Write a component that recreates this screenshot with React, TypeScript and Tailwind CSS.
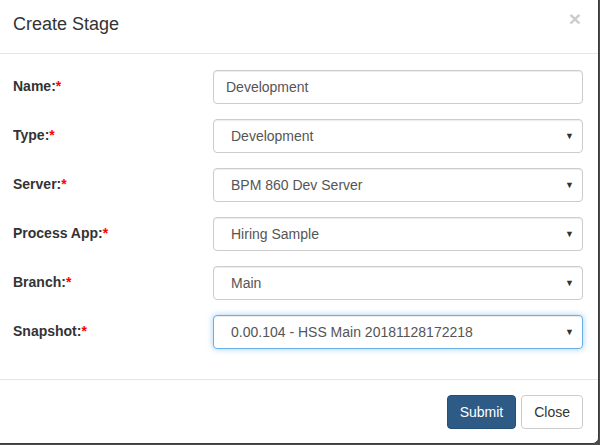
import { useState } from 'react'

const rows = [
  { label: 'Name:', value: 'Development', kind: 'input' },
  { label: 'Type:', value: 'Development', kind: 'select' },
  { label: 'Server:', value: 'BPM 860 Dev Server', kind: 'select' },
  { label: 'Process App:', value: 'Hiring Sample', kind: 'select' },
  { label: 'Branch:', value: 'Main', kind: 'select' },
  { label: 'Snapshot:', value: '0.00.104 - HSS Main 20181128172218', kind: 'select', focus: true },
]

function Field({ value, kind, focus }: { value: string; kind: string; focus?: boolean }) {
  const [val, setVal] = useState(value)
  const base =
    'w-[370px] h-[34px] rounded-[4px] border bg-white text-[14px] text-[#555] flex items-center'
  const border = focus
    ? 'border-[#66afe9] shadow-[inset_0_1px_1px_rgba(0,0,0,0.075),0_0_6px_rgba(102,175,233,0.6)]'
    : 'border-[#ccc] shadow-[inset_0_1px_1px_rgba(0,0,0,0.075)]'

  if (kind === 'input') {
    return (
      <input
        value={val}
        onChange={(e) => setVal(e.target.value)}
        className={`${base} ${border} px-[12px] outline-none`}
      />
    )
  }
  return (
    <div className={`${base} ${border} pl-[17px] pr-[8px] justify-between`}>
      <span>{val}</span>
      <span className="text-[9px] text-[#333] leading-none">▼</span>
    </div>
  )
}

export default function App() {
  return (
    <div
      className="w-[600px] h-[445px] bg-[#4d4d4d] overflow-hidden"
      style={{ fontFamily: '"Liberation Sans", Arial, sans-serif' }}
    >
      <div className="w-[599px] h-[444px] bg-white rounded-br-[6px] border-r border-b border-[#3a3a3a] flex flex-col">
        <div className="h-[54px] shrink-0 border-b border-[#e5e5e5] flex items-start justify-between pl-[13px] pr-[17px] pt-[11px]">
          <h4 className="text-[18px] leading-[26px] text-[#333]">Create Stage</h4>
          <button className="text-[21px] font-bold leading-none text-[#000] opacity-20 -mt-[3px]">×</button>
        </div>

        <div className="flex flex-col gap-[15px] pt-[16px] pb-[30px] pr-[15px]">
          {rows.map((r) => (
            <div key={r.label} className="flex items-center justify-between">
              <label className="pl-[13px] text-[14px] font-bold text-[#333] -mt-[2px]">
                {r.label}
                <span className="text-[#ff0000]">*</span>
              </label>
              <Field value={r.value} kind={r.kind} focus={r.focus} />
            </div>
          ))}
        </div>

        <div className="border-t border-[#e5e5e5] flex justify-end gap-[5px] pt-[15px] pr-[15px]">
          <button className="h-[34px] px-[12px] rounded-[4px] bg-[#2d5b86] border border-[#264f75] text-white text-[14px]">
            Submit
          </button>
          <button className="h-[34px] px-[12px] rounded-[4px] bg-white border border-[#ccc] text-[#333] text-[14px]">
            Close
          </button>
        </div>
      </div>
    </div>
  )
}
